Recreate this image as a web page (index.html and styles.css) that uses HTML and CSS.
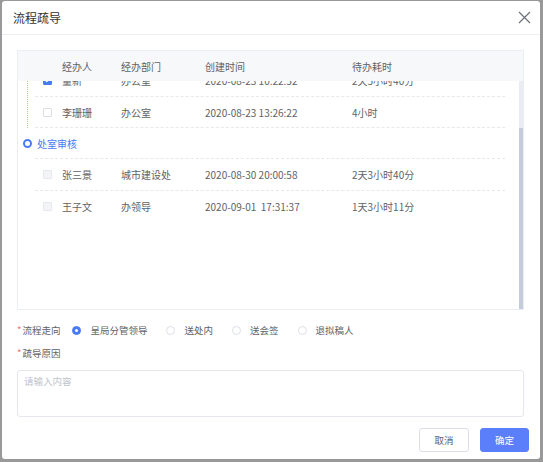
FILE: index.html
```html
<!DOCTYPE html>
<html lang="zh-CN">
<head>
    <meta charset="UTF-8">
    <meta name="viewport" content="width=device-width, initial-scale=1.0">
    <title>流程疏导</title>
    <link rel="stylesheet" href="styles.css">
</head>
<body>
    <div class="dialog">
        <div class="dialog-header">
            <span class="dialog-title">流程疏导</span>
            <svg class="close-icon" width="13" height="13" viewBox="0 0 13 13">
                <path d="M1 1L12 12M12 1L1 12" />
            </svg>
        </div>

        <div class="dialog-body">
            <div class="flow-table">
                <div class="flow-head">
                    <span></span>
                    <span>经办人</span>
                    <span>经办部门</span>
                    <span>创建时间</span>
                    <span>待办耗时</span>
                </div>

                <div class="flow-body">
                    <div class="flow-list" id="flow-list">
                        <div class="group">
                            <div class="group-title"><i class="dot"></i>科室办理</div>
                            <div class="group-rows">
                                <div class="row">
                                    <span class="checkbox checked"></span>
                                    <span>董新</span>
                                    <span>办公室</span>
                                    <span>2020-08-23 10:22:52</span>
                                    <span>2天5小时40分</span>
                                </div>
                                <div class="row">
                                    <span class="checkbox"></span>
                                    <span>李珊珊</span>
                                    <span>办公室</span>
                                    <span>2020-08-23 13:26:22</span>
                                    <span>4小时</span>
                                </div>
                            </div>
                        </div>

                        <div class="group">
                            <div class="group-title"><i class="dot"></i>处室审核</div>
                            <div class="group-rows">
                                <div class="row">
                                    <span class="checkbox disabled"></span>
                                    <span>张三景</span>
                                    <span>城市建设处</span>
                                    <span>2020-08-30 20:00:58</span>
                                    <span>2天3小时40分</span>
                                </div>
                                <div class="row">
                                    <span class="checkbox disabled"></span>
                                    <span>王子文</span>
                                    <span>办领导</span>
                                    <span class="pre">2020-09-01  17:31:37</span>
                                    <span>1天3小时11分</span>
                                </div>
                            </div>
                        </div>
                    </div>

                    <div class="scrollbar"><span class="thumb"></span></div>
                </div>
            </div>

            <div class="form-item first">
                <span class="form-label"><em>*</em>流程走向</span>
                <label class="radio checked"><span class="radio-inner"></span>呈局分管领导</label>
                <label class="radio"><span class="radio-inner"></span>送处内</label>
                <label class="radio"><span class="radio-inner"></span>送会签</label>
                <label class="radio"><span class="radio-inner"></span>退拟稿人</label>
            </div>

            <div class="form-item">
                <span class="form-label"><em>*</em>疏导原因</span>
            </div>

            <textarea class="reason" placeholder="请输入内容"></textarea>
        </div>

        <div class="dialog-footer">
            <button class="btn">取消</button>
            <button class="btn btn-primary">确定</button>
        </div>
    </div>

    <script>
        // список прокручен до конца, как на макете
        const list = document.getElementById('flow-list');
        list.scrollTop = list.scrollHeight;
    </script>
</body>
</html>
```

FILE: styles.css
```css
* {
    box-sizing: border-box;
    margin: 0;
    padding: 0;
}

body {
    background: #999;
    font-family: "Noto Sans CJK SC", sans-serif;
    font-size: 9.5px;
    color: #606266;
}

.dialog {
    margin: 1px 3px 3px 2px;
    height: 458px;
    background: #fff;
    border-radius: 3px;
}

.dialog-header {
    height: 34px;
    display: flex;
    align-items: center;
    justify-content: space-between;
    padding: 0 9px 0 11px;
    border-bottom: 1px solid #ebeef5;
}

.dialog-title {
    font-size: 12px;
    color: #333;
}

.close-icon path {
    stroke: #6b6f78;
    stroke-width: 1.2;
    fill: none;
}

.dialog-body {
    padding: 15px 16px 0 15px;
}

.flow-table {
    border: 1px solid #ebeef5;
    font-size: 10px;
}

.flow-head,
.row {
    display: grid;
    grid-template-columns: 19px 59px 84px 147px 1fr;
    align-items: center;
}

.flow-head {
    height: 30px;
    padding-left: 25px;
    background: #f7f8fa;
}

.flow-body {
    height: 228px;
    display: flex;
}

.flow-list {
    flex: 1;
    overflow: hidden;
    padding: 12px 14px 87px 0;
}

.scrollbar {
    width: 4px;
    background: #e9edf3;
}

.thumb {
    display: block;
    height: 181px;
    margin-top: 47px;
    background: #c3ccd8;
}

.group-title {
    height: 30px;
    display: flex;
    align-items: center;
    padding-left: 5px;
    color: #4a7bf7;
}

.dot {
    width: 9px;
    height: 9px;
    border: 2.5px solid #4a7bf7;
    border-radius: 50%;
    margin-right: 5px;
}

.group-rows {
    margin-left: 9px;
    padding-left: 7px;
    border-left: 1px dotted #a9bef5;
}

.group:last-child .group-rows {
    border-left-color: transparent;
}

.row {
    height: 32px;
    padding-left: 8px;
    border-top: 1px dashed #e6e8ee;
}

.group:not(:last-child) .row:last-child {
    border-bottom: 1px dashed #e6e8ee;
}

.pre {
    white-space: pre;
}

.checkbox {
    width: 9px;
    height: 9px;
    border: 1px solid #dcdfe6;
    border-radius: 1px;
    background: #fff;
    position: relative;
}

.checkbox.checked {
    background: #4a7bf7;
    border-color: #4a7bf7;
}

.checkbox.checked::after {
    content: "";
    position: absolute;
    left: 2px;
    top: 0;
    width: 2px;
    height: 4px;
    border: solid #fff;
    border-width: 0 1px 1px 0;
    transform: rotate(45deg);
}

.checkbox.disabled {
    background: #f2f4f7;
    border-color: #e6e8ee;
}

.form-item {
    height: 16px;
    margin-top: 7px;
    display: flex;
    align-items: center;
}

.form-item.first {
    margin-top: 12px;
}

.form-label {
    margin-right: 12px;
}

.form-label em {
    font-style: normal;
    color: #f56c6c;
    margin-right: 1px;
}

.radio {
    display: inline-flex;
    align-items: center;
    margin-right: 19px;
}

.radio-inner {
    width: 9px;
    height: 9px;
    border: 1px solid #dcdfe6;
    border-radius: 50%;
    margin-right: 9px;
    display: flex;
    align-items: center;
    justify-content: center;
}

.radio.checked .radio-inner {
    background: #4a7bf7;
    border-color: #4a7bf7;
}

.radio.checked .radio-inner::after {
    content: "";
    width: 3px;
    height: 3px;
    border-radius: 50%;
    background: #fff;
}

.reason {
    display: block;
    width: 100%;
    height: 47px;
    margin-top: 9px;
    padding: 3px 6px;
    border: 1px solid #e4e7ed;
    border-radius: 3px;
    font-family: inherit;
    font-size: 9.5px;
    line-height: 15px;
    resize: none;
    outline: none;
}

.reason::placeholder {
    color: #c0c4cc;
}

.dialog-footer {
    display: flex;
    justify-content: flex-end;
    gap: 11px;
    padding: 11px 11px 0 0;
}

.btn {
    width: 50px;
    height: 24px;
    border: 1px solid #dcdfe6;
    border-radius: 3px;
    background: #fff;
    color: #606266;
    font-family: inherit;
    font-size: 9.5px;
}

.btn-primary {
    width: 49px;
    background: #5b7ffa;
    border-color: #5b7ffa;
    color: #fff;
}
```
